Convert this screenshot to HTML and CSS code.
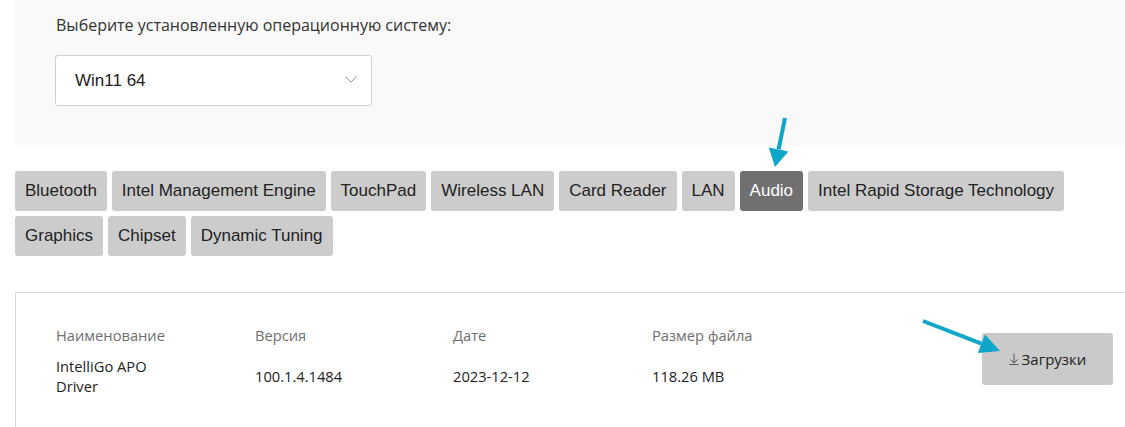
FILE: index.html
```html
<!DOCTYPE html>
<html lang="ru">
<head>
<meta charset="utf-8">
<title>Драйверы</title>
<link rel="stylesheet" href="styles.css">
</head>
<body>
<div class="page">
  <section class="os-panel">
    <p class="os-label">Выберите установленную операционную систему:</p>
    <div class="os-select">
      <span class="os-value">Win11 64</span>
      <svg class="chevron" width="12" height="7" viewBox="0 0 12 7"><path d="M0.5 0.5 L6 6 L11.5 0.5" fill="none" stroke="#999" stroke-width="1"/></svg>
    </div>
  </section>

  <nav class="tabs">
    <span class="tab">Bluetooth</span>
    <span class="tab">Intel Management Engine</span>
    <span class="tab">TouchPad</span>
    <span class="tab">Wireless LAN</span>
    <span class="tab">Card Reader</span>
    <span class="tab">LAN</span>
    <span class="tab active">Audio</span>
    <span class="tab">Intel Rapid Storage Technology</span>
    <span class="tab">Graphics</span>
    <span class="tab">Chipset</span>
    <span class="tab">Dynamic Tuning</span>
  </nav>

  <section class="driver-card">
    <div class="driver-info">
      <div class="cell head">Наименование</div>
      <div class="cell head">Версия</div>
      <div class="cell head">Дате</div>
      <div class="cell head">Размер файла</div>
      <div class="cell val name">IntelliGo APO Driver</div>
      <div class="cell val">100.1.4.1484</div>
      <div class="cell val">2023-12-12</div>
      <div class="cell val">118.26 MB</div>
    </div>
    <div class="dl-btn">
      <svg class="dl-icon" width="10" height="12" viewBox="0 0 10 12"><path d="M5 0.5 V10 M1.5 6.5 L5 10 L8.5 6.5 M0.5 11.5 H9.5" fill="none" stroke="#555" stroke-width="1"/></svg>
      <span>Загрузки</span>
    </div>
  </section>
</div>

<svg class="annotations" width="1125" height="427" viewBox="0 0 1125 427">
  <line x1="785" y1="118" x2="778.6" y2="149.4" stroke="#0ea6c8" stroke-width="4"/>
  <polygon points="775,167 788.4,151.4 768.8,147.4" fill="#0ea6c8"/>
  <line x1="923" y1="321" x2="981.4" y2="343.7" stroke="#0ea6c8" stroke-width="4"/>
  <polygon points="1000,351 977.8,353 985,334.4" fill="#0ea6c8"/>
</svg>
</body>
</html>
```

FILE: styles.css
```css
html, body {
  margin: 0;
  padding: 0;
  background: #fff;
  overflow: hidden;
}

.page {
  padding-left: 15px;
  margin-right: -40px;
}

.os-panel {
  background: #f9f9f9;
  padding: 14px 0 39px 41px;
}

.os-label {
  margin: 0 0 19px 0;
  font-family: "Open Sans", "Noto Sans", sans-serif;
  font-size: 16px;
  line-height: 22px;
  color: #333;
}

.os-select {
  box-sizing: border-box;
  width: 317px;
  height: 51px;
  margin-left: -1px;
  background: #fff;
  border: 1px solid #cfcfcf;
  border-radius: 3px;
  display: flex;
  align-items: center;
  justify-content: space-between;
  padding: 0 14px 0 19px;
}

.os-value {
  font-family: "Liberation Sans", Arial, sans-serif;
  font-size: 17px;
  color: #222;
}

.chevron {
  margin-top: -3px;
}

.tabs {
  display: flex;
  flex-wrap: wrap;
  gap: 5px;
  margin-top: 26px;
  width: 1060px;
}

.tab {
  box-sizing: border-box;
  height: 40px;
  padding: 0 10px;
  display: flex;
  align-items: center;
  background: #cccccc;
  border-radius: 3px;
  font-family: "Liberation Sans", Arial, sans-serif;
  font-size: 17px;
  color: #222;
}

.tab.active {
  background: #707070;
  color: #fff;
}

.driver-card {
  margin-top: 36px;
  border-top: 1px solid #d9d9d9;
  border-left: 1px solid #d9d9d9;
  padding: 32px 0 40px 40px;
  display: flex;
  align-items: center;
}

.driver-info {
  display: grid;
  grid-template-columns: 199px 198px 199px 199px;
  row-gap: 11px;
  align-items: center;
  font-family: "Open Sans", "Noto Sans", sans-serif;
  font-size: 14.7px;
  line-height: 20px;
}

.cell.head {
  color: #6f6f6f;
}

.cell.val {
  color: #222;
}

.cell.name {
  max-width: 120px;
}

.dl-btn {
  box-sizing: border-box;
  width: 131px;
  height: 52px;
  margin-left: 131px;
  margin-top: -3px;
  background: #cacaca;
  border-radius: 3px;
  display: flex;
  align-items: center;
  justify-content: center;
  gap: 3px;
  font-family: "Open Sans", "Noto Sans", sans-serif;
  font-size: 15px;
  color: #222;
}

.dl-icon {
  margin-top: -1px;
}

.annotations {
  position: absolute;
  left: 0;
  top: 0;
  pointer-events: none;
}
```
